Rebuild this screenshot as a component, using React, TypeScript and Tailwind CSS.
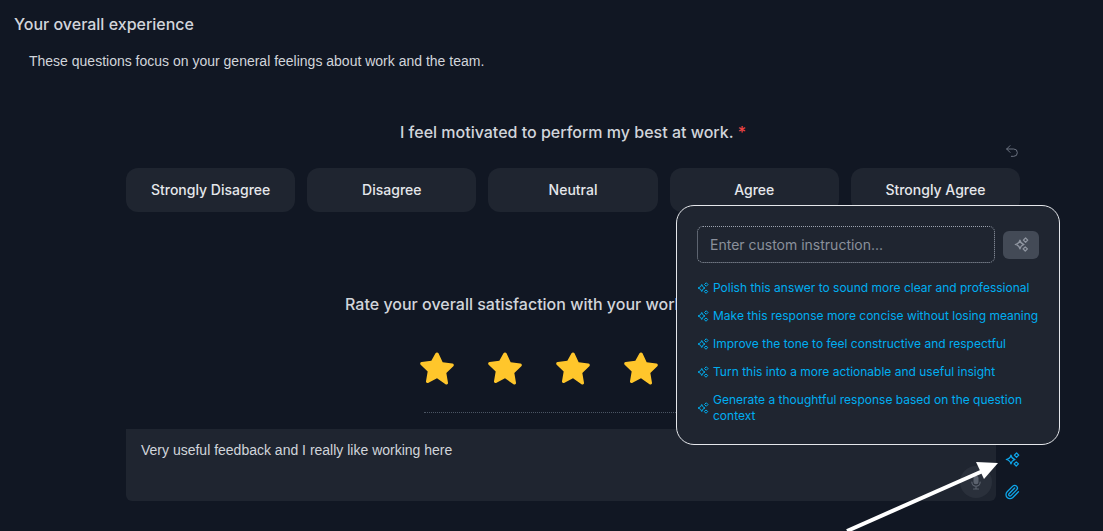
import { Paperclip, Undo2 } from "lucide-react";

const options = ["Strongly Disagree", "Disagree", "Neutral", "Agree", "Strongly Agree"];

const suggestions = [
  "Polish this answer to sound more clear and professional",
  "Make this response more concise without losing meaning",
  "Improve the tone to feel constructive and respectful",
  "Turn this into a more actionable and useful insight",
  "Generate a thoughtful response based on the question context",
];

function Sparkle({ className }: { className: string }) {
  return (
    <svg viewBox="0 0 24 24" fill="none" stroke="currentColor" strokeWidth="2" strokeLinejoin="round" className={className}>
      <path d="M9.5 5 Q10.5 10.5 16 12 Q10.5 13.5 9.5 19 Q8.5 13.5 2 12 Q8.5 10.5 9.5 5 Z" />
      <path d="M18.5 1.5 L22 5 L18.5 8.5 L15 5 Z" />
      <path d="M18 16 L21.5 19 L18 22.5 L14.5 19 Z" />
    </svg>
  );
}

function Star() {
  return (
    <svg viewBox="0 0 24 24" className="h-10 w-10 text-[#ffc62b]" fill="currentColor">
      <path d="M11.1 2.6a1 1 0 0 1 1.8 0l2.5 5.3 5.8.8a1 1 0 0 1 .6 1.7l-4.2 4 1 5.8a1 1 0 0 1-1.5 1L12 17.6l-5.1 2.7a1 1 0 0 1-1.5-1l1-5.8-4.2-4a1 1 0 0 1 .6-1.7l5.8-.8z" />
    </svg>
  );
}

function MicIcon() {
  return (
    <svg viewBox="0 0 12 18" className="h-[15px] w-[10px] text-[#5b626e]" fill="none" stroke="currentColor" strokeWidth="1.4" strokeLinecap="round">
      <rect x="3" y="1" width="6" height="10" rx="3" fill="currentColor" stroke="none" />
      <path d="M1 8.5a5 5 0 0 0 10 0M6 13.5V16.5M3 16.8H9" />
    </svg>
  );
}

export default function App() {
  return (
    <div className="relative h-[531px] w-[1103px] overflow-hidden bg-[#111723] font-['Inter',sans-serif] text-[#d1d5db]">
      {/* Section header */}
      <div className="pt-[15px] pl-[14px]">
        <h2 className="text-base leading-[19px] font-medium">Your overall experience</h2>
        <p className="mt-[19px] pl-[15px] font-['Liberation_Sans',sans-serif] text-sm leading-[17px]">
          These questions focus on your general feelings about work and the team.
        </p>
      </div>

      {/* Questions */}
      <div className="ml-[126px] w-[894px] pt-[53px]">
        <p className="text-center text-base leading-[19px] font-medium">
          I feel motivated to perform my best at work. <span className="text-[#ef4444]">*</span>
        </p>
        <div className="flex justify-end pt-[1px]">
          <Undo2 className="h-4 w-4 text-[#6b7280]" strokeWidth={1.5} />
        </div>
        <div className="mt-[9px] flex gap-3">
          {options.map((o) => (
            <div key={o} className="flex h-11 flex-1 items-center justify-center rounded-xl bg-[#1f2530] text-sm font-medium text-[#e5e7eb]">
              {o}
            </div>
          ))}
        </div>

        <p className="mt-[83px] text-center text-base leading-[19px] font-medium">
          Rate your overall satisfaction with your work environment. <span className="text-[#ef4444]">*</span>
        </p>
        <div className="mt-[35px] flex justify-center gap-[28px]">
          <Star />
          <Star />
          <Star />
          <Star />
          <Star />
        </div>
        <div className="mx-auto mt-[23px] w-[298px] border-t border-dotted border-[#4b5563]" />

        <div className="mt-[16px] flex items-start gap-2">
          <div className="relative h-[72px] w-[870px] rounded-b-md bg-[#1f2530] px-[15px] py-[13px] font-['Liberation_Sans',sans-serif] text-sm leading-[17px] text-[#d1d5db]">
            Very useful feedback and I really like working here
            <div className="absolute right-[4px] bottom-[3px] flex h-8 w-8 items-center justify-center rounded-full bg-[#2a303b]">
              <MicIcon />
            </div>
          </div>
          <div className="flex flex-col items-center gap-[17px] pt-[23px] text-[#0ea5e9]">
            <Sparkle className="h-[15px] w-[15px]" />
            <Paperclip className="h-4 w-4" />
          </div>
        </div>
      </div>

      {/* AI popover */}
      <div className="absolute top-[205px] left-[676px] h-[240px] w-[384px] rounded-[18px] border border-[#e5e7eb] bg-[#1f2530] px-5 pt-5">
        <div className="flex items-center gap-2">
          <div className="flex h-[37px] flex-1 items-center rounded-md border border-dotted border-[#9ca3af] px-3 text-sm text-[#8a909b]">
            Enter custom instruction...
          </div>
          <div className="flex h-7 w-9 items-center justify-center rounded-md bg-[#434a56]">
            <Sparkle className="h-[15px] w-[15px] text-[#8f95a0]" />
          </div>
        </div>
        <ul className="mt-[17px] flex flex-col gap-[12px]">
          {suggestions.map((s) => (
            <li key={s} className="flex items-center gap-[4px] text-xs leading-4 text-[#00aef0]">
              <Sparkle className="h-3 w-3 shrink-0" />
              <span>{s}</span>
            </li>
          ))}
        </ul>
      </div>

      {/* Annotation arrow */}
      <svg viewBox="0 0 1103 531" className="pointer-events-none absolute inset-0 h-full w-full">
        <path d="M847 531 L985 470" stroke="#fff" strokeWidth="4" />
        <path d="M998 463 L976 462 L984 479 Z" fill="#fff" />
      </svg>
    </div>
  );
}
